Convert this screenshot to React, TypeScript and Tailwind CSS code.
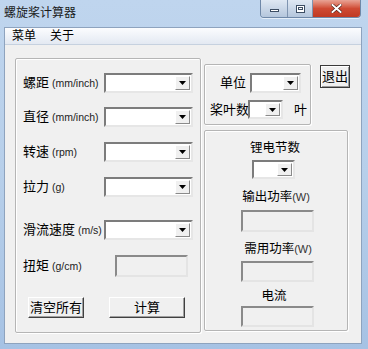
import React from "react";

const FONT = { fontFamily: '"Liberation Sans", "Noto Sans CJK SC", sans-serif' };

function Arrow() {
  return (
    <svg width="7" height="4" viewBox="0 0 7 4">
      <polygon points="0,0 7,0 3.5,4" fill="#000" />
    </svg>
  );
}

function Combo({ w, h }: { w: number; h: number }) {
  return (
    <div
      className="shrink-0 flex border-2 border-t-[#7c7c7c] border-l-[#7c7c7c] border-r-[#e6e6e6] border-b-[#e6e6e6] bg-white"
      style={{ width: w, height: h }}
    >
      <div className="flex-1" />
      <div className="w-[15px] my-[1px] mr-[1px] flex items-center justify-center bg-[#f0f0f0] border border-t-white border-l-white border-r-[#8a8a8a] border-b-[#8a8a8a]">
        <Arrow />
      </div>
    </div>
  );
}

function ReadBox({ w, h }: { w: number; h: number }) {
  return (
    <div
      className="shrink-0 border-2 border-t-[#8a8a8a] border-l-[#8a8a8a] border-r-[#e4e4e4] border-b-[#e4e4e4] bg-[#f0f0f0]"
      style={{ width: w, height: h }}
    />
  );
}

function Btn({ w, h, children }: { w: number; h: number; children: React.ReactNode }) {
  return (
    <div
      className="shrink-0 flex items-center justify-center bg-[#f0f0f0] border border-t-white border-l-white border-r-[#404040] border-b-[#404040] shadow-[inset_-1px_-1px_0_#a0a0a0] text-[13px] text-black"
      style={{ width: w, height: h }}
    >
      {children}
    </div>
  );
}

function Label({ cn, en, w }: { cn: string; en?: string; w: number }) {
  return (
    <div className="shrink-0 pl-[7px] flex items-baseline whitespace-nowrap text-black" style={{ width: w }}>
      <span className="text-[13px] leading-[16px]">{cn}</span>
      {en && <span className="text-[10.5px] leading-[16px] text-[#222]">&nbsp;{en}</span>}
    </div>
  );
}

const groupCls =
  "rounded-[2px] border border-[#b5b5b5] shadow-[1px_1px_0_#ffffff,inset_1px_1px_0_#ffffff]";

export default function App() {
  return (
    <div
      className="w-[368px] h-[349px] overflow-hidden bg-gradient-to-b from-[#bfd5ee] via-[#b7cfea] to-[#a6c2e4] flex flex-col"
      style={FONT}
    >
      {/* Title bar */}
      <div className="h-[27px] flex items-start shrink-0">
        <div className="pl-[4px] pt-[6px] text-[12px] leading-[14px] text-[#1a1a1a]">螺旋桨计算器</div>
        <div className="flex-1" />
        <div className="flex mr-[7px] h-[18px] rounded-b-[4px] overflow-hidden border border-t-0 border-[#6f88a8] shadow-[0_1px_0_rgba(255,255,255,0.6)]">
          <div className="w-[27px] flex items-center justify-center bg-gradient-to-b from-[#dfe8f3] to-[#b4c6dc] border-r border-[#7f94b0]">
            <div className="w-[9px] h-[3px] bg-white border border-[#3c4d63] mt-[3px]" />
          </div>
          <div className="w-[25px] flex items-center justify-center bg-gradient-to-b from-[#dfe8f3] to-[#b4c6dc] border-r border-[#7f94b0]">
            <div className="w-[9px] h-[8px] bg-white border border-[#3c4d63] flex items-center justify-center">
              <div className="w-[5px] h-[3px] border border-[#3c4d63] bg-white" />
            </div>
          </div>
          <div className="w-[47px] flex items-center justify-center bg-gradient-to-b from-[#e8a395] via-[#cf4a33] to-[#c03a23]">
            <svg width="11" height="9" viewBox="0 0 11 9">
              <path d="M1.5 1 L9.5 8 M9.5 1 L1.5 8" stroke="#4a1a12" strokeWidth="3.2" strokeLinecap="square" />
              <path d="M1.5 1 L9.5 8 M9.5 1 L1.5 8" stroke="#ffffff" strokeWidth="2" strokeLinecap="square" />
            </svg>
          </div>
        </div>
      </div>

      {/* Client */}
      <div className="ml-[4px] w-[358px] h-[317px] flex flex-col border border-[#8ea3be] bg-[#f0f0f0]">
        {/* Menu bar */}
        <div className="h-[17px] shrink-0 flex items-center gap-[14px] pl-[7px] bg-gradient-to-b from-[#fbfcfe] to-[#e3e9f2] border-b border-[#c6d1df] text-[12px] leading-[14px] text-black">
          <span>菜单</span>
          <span>关于</span>
        </div>

        {/* Body */}
        <div className="flex-1 flex items-start pl-[10px]">
          {/* Left group */}
          <div className={`${groupCls} mt-[13px] w-[186px] h-[275px] flex flex-col`}>
            <div className="flex items-center mt-[14px]">
              <Label cn="螺距" en="(mm/inch)" w={88} />
              <Combo w={89} h={20} />
            </div>
            <div className="flex items-center mt-[14px]">
              <Label cn="直径" en="(mm/inch)" w={88} />
              <Combo w={89} h={20} />
            </div>
            <div className="flex items-center mt-[15px]">
              <Label cn="转速" en="(rpm)" w={88} />
              <Combo w={89} h={20} />
            </div>
            <div className="flex items-center mt-[15px]">
              <Label cn="拉力" en="(g)" w={88} />
              <Combo w={89} h={20} />
            </div>
            <div className="flex items-center mt-[23px]">
              <Label cn="滑流速度" en="(m/s)" w={88} />
              <Combo w={89} h={20} />
            </div>
            <div className="flex items-center mt-[15px]">
              <Label cn="扭矩" en="(g/cm)" w={99} />
              <ReadBox w={73} h={22} />
            </div>
            <div className="flex items-center mt-[20px] pl-[12px]">
              <Btn w={56} h={21}>清空所有</Btn>
              <div className="w-[25px]" />
              <Btn w={76} h={21}>计算</Btn>
            </div>
          </div>

          {/* Right column */}
          <div className="ml-[3px] mt-[19px] flex flex-col">
            <div className="flex items-start">
              <div className={`${groupCls} w-[107px] h-[61px] flex flex-col text-[13px] leading-[16px] text-black`}>
                <div className="flex items-center mt-[8px] pl-[15px]">
                  <span className="w-[30px] shrink-0">单位</span>
                  <Combo w={51} h={20} />
                </div>
                <div className="flex items-center mt-[7px] pl-[5px]">
                  <span className="w-[38px] shrink-0 whitespace-nowrap">桨叶数</span>
                  <Combo w={35} h={19} />
                  <span className="ml-[11px]">叶</span>
                </div>
              </div>
              <div className="ml-[9px] mt-[1px] w-[30px] h-[23px] flex items-center justify-center bg-[#f0f0f0] border border-[#3a3a3a] shadow-[inset_1px_1px_0_#ffffff,inset_-1px_-1px_0_#9a9a9a] text-[13px] text-black">
                退出
              </div>
            </div>
            <div className={`${groupCls} mt-[5px] w-[144px] h-[201px] flex flex-col items-center text-[12.5px] leading-[16px] text-black`}>
              <div className="mt-[9px] mr-[2px]">锂电节数</div>
              <div className="mt-[4px] mr-[6px]">
                <Combo w={43} h={19} />
              </div>
              <div className="mt-[10px] whitespace-nowrap">输出功率<span className="text-[11px] text-[#333]">(W)</span></div>
              <div className="mt-[5px] ml-[2px]"><ReadBox w={73} h={22} /></div>
              <div className="mt-[9px] ml-[4px] whitespace-nowrap">需用功率<span className="text-[11px] text-[#333]">(W)</span></div>
              <div className="mt-[4px] ml-[2px]"><ReadBox w={73} h={21} /></div>
              <div className="mt-[6px] mr-[4px]">电流</div>
              <div className="mt-[2px] ml-[2px]"><ReadBox w={73} h={21} /></div>
            </div>
          </div>
        </div>
      </div>
    </div>
  );
}
